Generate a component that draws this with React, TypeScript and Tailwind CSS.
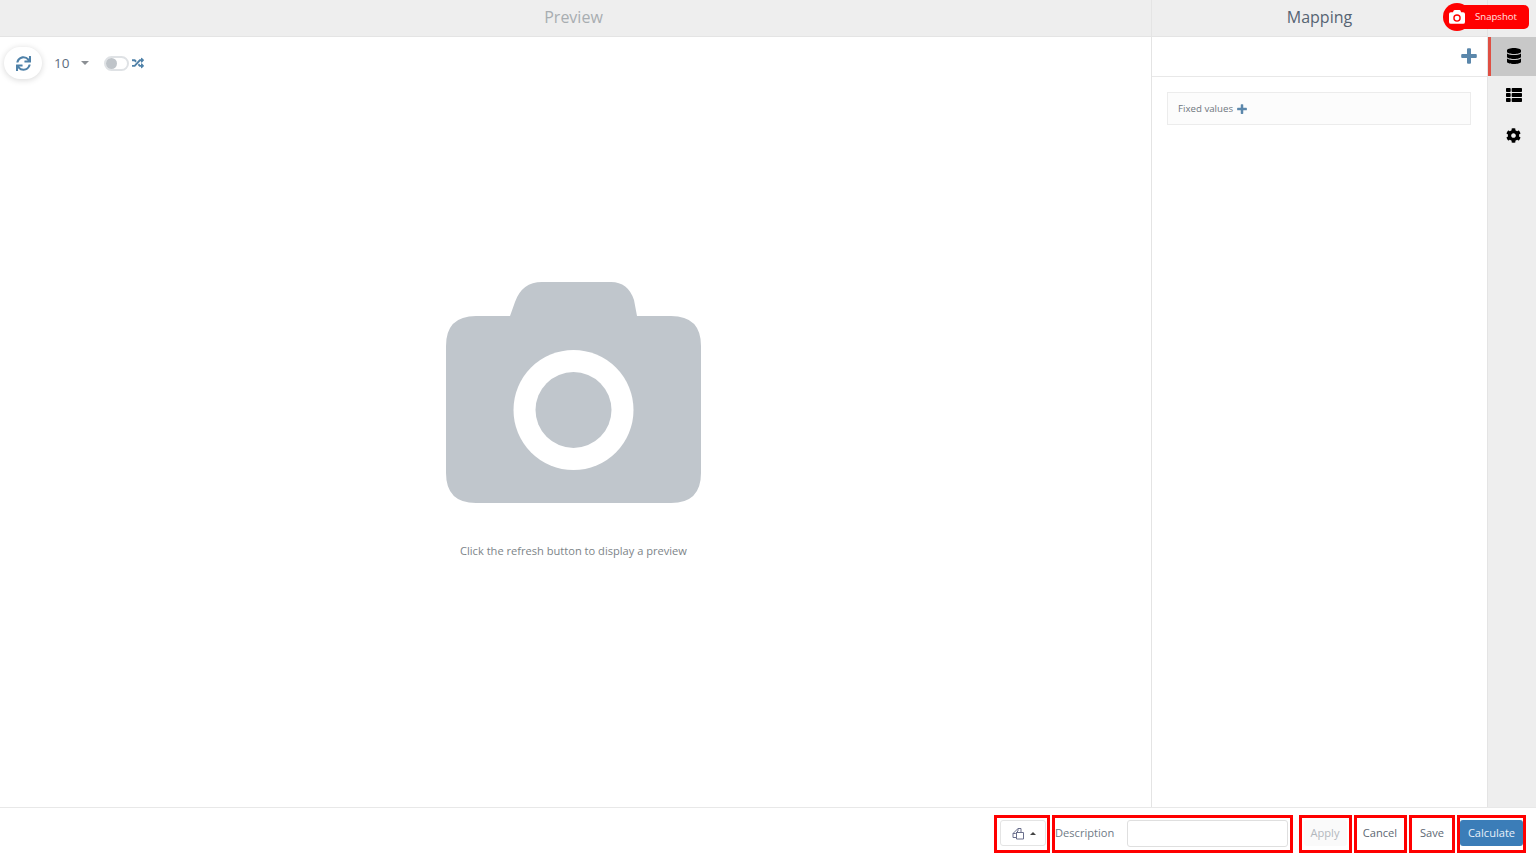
import { FaCog, FaDatabase, FaRandom, FaSync, FaThList } from "react-icons/fa";

const CAMERA_BODY =
  "M30 34H64L69 20Q76 0 96 0H165Q182 0 188 18L191 34H225Q255 34 255 64V191Q255 221 225 221H30Q0 221 0 191V64Q0 34 30 34Z";

function Camera({ size, body, ring }: { size: number; body: string; ring: string }) {
  return (
    <svg width={size} height={(size * 221) / 255} viewBox="0 0 255 221">
      <path d={CAMERA_BODY} fill={body} />
      <circle cx="127.5" cy="128" r="60" fill={ring} />
      <circle cx="127.5" cy="128" r="38" fill={body} />
    </svg>
  );
}

function Plus({ size }: { size: number }) {
  return (
    <svg width={size} height={size} viewBox="0 0 16 16" className="shrink-0">
      <path d="M6 1.200q0-1 1-1h2q1 0 1 1V6h4.800q1 0 1 1v2q0 1-1 1H10v4.800q0 1-1 1H7q-1 0-1-1V10H1.200q-1 0-1-1V7q0-1 1-1H6Z" fill="#5b87ab" />
    </svg>
  );
}

function CopyIcon() {
  return (
    <svg width="13" height="13" viewBox="0 0 13 13" fill="#fff" stroke="#6a6f8c" strokeWidth="1">
      <path d="M1 6.500L6 1.500H9V7L4.500 10.500H1Z" />
      <path d="M4.500 5.500H11.500V12H4.500Z" />
      <path d="M6 1.500V4L3.500 6.500H1" fill="none" />
    </svg>
  );
}

function Preview() {
  return (
    <div className="flex min-w-0 flex-1 flex-col">
      <div className="flex h-[37px] items-center justify-center border-b border-[#e4e4e4] bg-[#eeeeee] pb-[2px] pr-[4px] text-[16px] text-[#a8adb1]">
        Preview
      </div>
      <div className="flex h-[52px] items-center pl-[4px]">
        <button className="flex h-[32px] w-[38px] items-center justify-center rounded-full bg-white text-[#4f81a8] shadow-[0_1px_6px_rgba(0,0,0,0.16)]">
          <FaSync className="text-[15px]" />
        </button>
        <span className="ml-[12px] text-[13.500px] text-[#5d6d7e]">10</span>
        <span className="ml-[12px] h-0 w-0 border-x-[4px] border-t-[4px] border-x-transparent border-t-[#8b8f94]" />
        <span className="ml-[15px] flex h-[15px] w-[25px] items-center rounded-full border-2 border-[#dfe2e5]">
          <span className="h-[11px] w-[11px] rounded-full bg-[#bfc4c9]" />
        </span>
        <FaRandom className="ml-[3px] text-[12px] text-[#4f81a8]" />
      </div>
      <div className="flex flex-1 flex-col items-center pr-[4px] pt-[193px]">
        <Camera size={255} body="#c0c6cc" ring="#ffffff" />
        <p className="mt-[40px] text-[11.100px] leading-[16px] text-[#7d8488]">Click the refresh button to display a preview</p>
      </div>
    </div>
  );
}

function Mapping() {
  return (
    <div className="relative flex w-[385px] shrink-0 border-l border-[#e4e4e4]">
      <div className="flex min-w-0 flex-1 flex-col">
        <div className="flex h-[37px] items-center justify-center border-b border-[#e4e4e4] bg-[#eeeeee] pb-[2px] text-[16px] text-[#566473]">
          Mapping
        </div>
        <div className="flex h-[40px] items-center justify-end border-b border-[#e8e8e8] pb-[2px] pr-[10px]">
          <Plus size={16} />
        </div>
        <div className="pl-[15px] pr-[16px] pt-[15px]">
          <div className="flex h-[33px] items-center gap-[4px] border border-[#ececec] bg-[#fcfcfc] pl-[10px] pt-[1px] text-[9.700px] text-[#6f7780]">
            Fixed values
            <Plus size={10} />
          </div>
        </div>
      </div>
      <div className="flex w-[49px] shrink-0 flex-col border-l border-[#e4e4e4] bg-[#eeeeee] pt-[37px]">
        <div className="flex h-[39px] items-center justify-center border-l-[3px] border-[#df4f43] bg-[#c8c8c8] pb-[2px] pl-[1px] text-black">
          <FaDatabase className="text-[16px]" />
        </div>
        <div className="flex h-[40px] items-center justify-center pb-[2px] pl-[4px] text-black">
          <FaThList className="text-[16px]" />
        </div>
        <div className="flex h-[40px] items-center justify-center pb-[1px] pl-[3px] text-black">
          <FaCog className="text-[15px]" />
        </div>
      </div>
      <div className="absolute left-[291px] top-[3px] flex h-[28px] items-center">
        <span className="z-10 flex h-[28px] w-[28px] items-center justify-center rounded-full bg-[#ff0000]">
          <Camera size={16} body="#ffffff" ring="#ff0000" />
        </span>
        <span className="-ml-[8px] flex h-[24px] w-[66px] items-center justify-end rounded-r-[5px] bg-[#ff0000] pr-[12px] text-[9.600px] text-[#ffe4e4]">
          Snapshot
        </span>
      </div>
    </div>
  );
}

function Footer() {
  return (
    <div className="flex h-[48px] shrink-0 items-start justify-end border-t border-[#e8e8e8] bg-white pr-[10px] pt-[7px] text-[11.100px]">
      <div className="flex h-[38px] w-[56px] items-center justify-center border-[3px] border-[#ff0000] pb-[2px] pl-[1px]">
        <button className="flex h-[26px] w-[46px] items-center justify-center gap-[5px] rounded-[3px] border border-[#e4e4e4] pl-[2px]">
          <CopyIcon />
          <span className="h-0 w-0 border-x-[3px] border-b-[3px] border-x-transparent border-b-[#444]" />
        </button>
      </div>
      <div className="ml-[2px] flex h-[38px] w-[241px] items-center border-[3px] border-[#ff0000] pb-[2px]">
        <span className="w-[72px] text-[#6f7a85]">Description</span>
        <div className="h-[27px] w-[161px] rounded-[3px] border border-[#dfdfdf] bg-white" />
      </div>
      <div className="ml-[6px] flex h-[38px] w-[53px] items-center justify-center border-[3px] border-[#ff0000] pb-[2px] text-[#b3b8bd]">
        <span className="flex h-[26px] w-[43px] items-center justify-center rounded-[3px] bg-[#fafafa] pr-[1px]">Apply</span>
      </div>
      <div className="ml-[2px] flex h-[38px] w-[53px] items-center justify-center border-[3px] border-[#ff0000] pb-[2px] pr-[1px] text-[#5d6873]">
        Cancel
      </div>
      <div className="ml-[2px] flex h-[38px] w-[46px] items-center justify-center border-[3px] border-[#ff0000] pb-[2px] text-[#5d6873]">
        Save
      </div>
      <div className="ml-[2px] flex h-[38px] w-[69px] items-center justify-center border-[3px] border-[#ff0000] pb-[2px]">
        <span className="flex h-[26px] w-[63px] items-center justify-center rounded-[3px] bg-[#3b7db8] text-[#e8f0f8]">Calculate</span>
      </div>
    </div>
  );
}

export default function App() {
  return (
    <div className="flex h-[855px] w-[1536px] flex-col overflow-hidden bg-white font-['Open_Sans',sans-serif]">
      <div className="flex min-h-0 flex-1">
        <Preview />
        <Mapping />
      </div>
      <Footer />
    </div>
  );
}
